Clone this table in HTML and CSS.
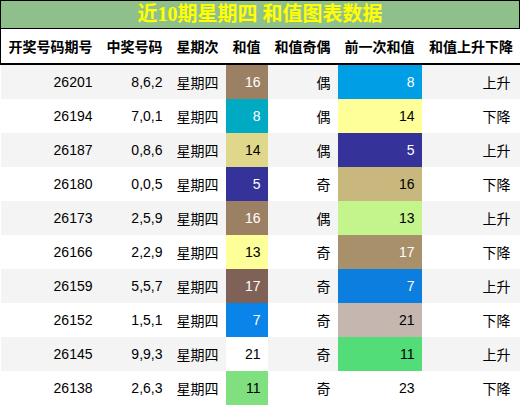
FILE: index.html
```html
<!DOCTYPE html>
<html lang="zh">
<head>
    <meta charset="UTF-8">
    <meta name="viewport" content="width=device-width, initial-scale=1.0">
    <title>近10期星期四 和值图表数据</title>
    <link rel="stylesheet" href="styles.css">
</head>
<body>
    <div class="title">近10期星期四 和值图表数据</div>
    <table class="data">
        <colgroup>
            <col class="c1"><col class="c2"><col class="c3"><col class="c4"><col class="c5"><col class="c6"><col class="c7">
        </colgroup>
        <thead>
            <tr>
                <th>开奖号码期号</th>
                <th>中奖号码</th>
                <th>星期次</th>
                <th>和值</th>
                <th>和值奇偶</th>
                <th>前一次和值</th>
                <th>和值上升下降</th>
            </tr>
        </thead>
        <tbody>
            <tr><td>26201</td><td>8,6,2</td><td>星期四</td><td class="s-brown">16</td><td>偶</td><td class="p-sky">8</td><td>上升</td></tr>
            <tr><td>26194</td><td>7,0,1</td><td>星期四</td><td class="s-cyan">8</td><td>偶</td><td class="p-yellow">14</td><td>下降</td></tr>
            <tr><td>26187</td><td>0,8,6</td><td>星期四</td><td class="s-khaki">14</td><td>偶</td><td class="p-navy">5</td><td>上升</td></tr>
            <tr><td>26180</td><td>0,0,5</td><td>星期四</td><td class="s-navy">5</td><td>奇</td><td class="p-tan">16</td><td>下降</td></tr>
            <tr><td>26173</td><td>2,5,9</td><td>星期四</td><td class="s-brown">16</td><td>偶</td><td class="p-lime">13</td><td>上升</td></tr>
            <tr><td>26166</td><td>2,2,9</td><td>星期四</td><td class="s-yellow">13</td><td>奇</td><td class="p-bronze">17</td><td>下降</td></tr>
            <tr><td>26159</td><td>5,5,7</td><td>星期四</td><td class="s-mocha">17</td><td>奇</td><td class="p-blue">7</td><td>上升</td></tr>
            <tr><td>26152</td><td>1,5,1</td><td>星期四</td><td class="s-blue">7</td><td>奇</td><td class="p-rose">21</td><td>下降</td></tr>
            <tr><td>26145</td><td>9,9,3</td><td>星期四</td><td class="s-white">21</td><td>奇</td><td class="p-green">11</td><td>上升</td></tr>
            <tr><td>26138</td><td>2,6,3</td><td>星期四</td><td class="s-green">11</td><td>奇</td><td class="p-white">23</td><td>下降</td></tr>
        </tbody>
    </table>
</body>
</html>
```

FILE: styles.css
```css
body {
    margin: 0;
    font-family: "Liberation Sans", "Noto Sans CJK SC", sans-serif;
    font-size: 14px;
    color: #000;
    background: #fff;
}
.title {
    height: 27px;
    line-height: 27px;
    background-color: #8fbf8b;
    border: 1px solid #000;
    color: #ffff00;
    font-family: "Liberation Serif", "Noto Sans CJK SC", serif;
    font-size: 20px;
    font-weight: bold;
    text-align: center;
}
.data {
    width: 520px;
    border-collapse: collapse;
    table-layout: fixed;
}
.c1 { width: 99px; }
.c2 { width: 70px; }
.c3 { width: 56px; }
.c4 { width: 42px; }
.c5 { width: 70px; }
.c6 { width: 84px; }
.c7 { width: 99px; }
.data th {
    height: 34px;
    padding: 0 7px 0 0;
    text-align: right;
    font-weight: bold;
    border-bottom: 2px solid #000;
    white-space: nowrap;
}
.data thead tr {
    border-left: 1px solid #000;
    border-right: 1px solid #000;
}
.data td {
    height: 34px;
    padding: 0 7px 0 0;
    text-align: right;
    white-space: nowrap;
}
.data td:last-child {
    padding-right: 10px;
}
.data tbody tr:nth-child(odd) {
    background-color: #f4f4f4;
}
.data tbody tr:nth-child(even) {
    background-color: #fff;
}
/* 和值 colours */
.s-brown { background-color: #9c8064; color: #fff; }
.s-cyan { background-color: #00aac2; color: #fff; }
.s-khaki { background-color: #dfd88a; }
.s-navy { background-color: #35339a; color: #fff; }
.s-yellow { background-color: #ffff99; }
.s-mocha { background-color: #7f6157; color: #fff; }
.s-blue { background-color: #0a84e8; color: #fff; }
.s-white { background-color: #fff; }
.s-green { background-color: #80e080; }
/* 前一次和值 colours */
.p-sky { background-color: #009fe5; color: #fff; }
.p-yellow { background-color: #ffff99; }
.p-navy { background-color: #35339a; color: #fff; }
.p-tan { background-color: #c8b87e; }
.p-lime { background-color: #c4f48c; }
.p-bronze { background-color: #a8906a; color: #fff; }
.p-blue { background-color: #0b7ee0; color: #fff; }
.p-rose { background-color: #c6b6b0; }
.p-green { background-color: #52dd78; }
.p-white { background-color: #fff; }
```
